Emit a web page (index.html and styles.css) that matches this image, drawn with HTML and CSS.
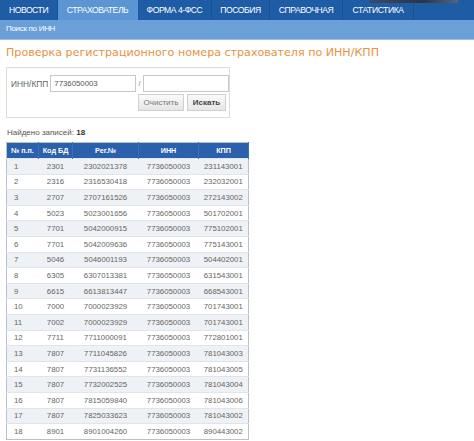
FILE: index.html
```html
<!DOCTYPE html>
<html lang="ru">
<head>
    <meta charset="UTF-8">
    <title>Проверка регистрационного номера страхователя</title>
    <link rel="stylesheet" href="styles.css">
</head>
<body>
    <div class="header">
        <div class="photo"></div>
        <ul class="menu">
            <li>Новости</li>
            <li class="active">Страхователь</li>
            <li>Форма 4-ФСС</li>
            <li>Пособия</li>
            <li>Справочная</li>
            <li>Статистика</li>
        </ul>
        <div class="submenu">Поиск по ИНН</div>
    </div>

    <div class="content">
        <h1>Проверка регистрационного номера страхователя по ИНН/КПП</h1>

        <form class="search-box">
            <div class="search-row">
                <label>ИНН/КПП</label>
                <input type="text" class="field" value="7736050003">
                <span class="slash">/</span>
                <input type="text" class="field">
            </div>
            <div class="buttons">
                <button type="button" class="btn">Очистить</button>
                <button type="button" class="btn btn-bold">Искать</button>
            </div>
        </form>

        <p class="found">Найдено записей: <b>18</b></p>

        <table class="results">
            <thead>
                <tr>
                    <th class="c1">№ п.п.</th>
                    <th class="c2">Код БД</th>
                    <th class="c3">Рег.№</th>
                    <th class="c4">ИНН</th>
                    <th class="c5">КПП</th>
                </tr>
            </thead>
            <tbody>
                <tr><td>1</td><td>2301</td><td>2302021378</td><td>7736050003</td><td>231143001</td></tr>
                <tr><td>2</td><td>2316</td><td>2316530418</td><td>7736050003</td><td>232032001</td></tr>
                <tr><td>3</td><td>2707</td><td>2707161526</td><td>7736050003</td><td>272143002</td></tr>
                <tr><td>4</td><td>5023</td><td>5023001656</td><td>7736050003</td><td>501702001</td></tr>
                <tr><td>5</td><td>7701</td><td>5042000915</td><td>7736050003</td><td>775102001</td></tr>
                <tr><td>6</td><td>7701</td><td>5042009636</td><td>7736050003</td><td>775143001</td></tr>
                <tr><td>7</td><td>5046</td><td>5046001193</td><td>7736050003</td><td>504402001</td></tr>
                <tr><td>8</td><td>6305</td><td>6307013381</td><td>7736050003</td><td>631543001</td></tr>
                <tr><td>9</td><td>6615</td><td>6613813447</td><td>7736050003</td><td>668543001</td></tr>
                <tr><td>10</td><td>7000</td><td>7000023929</td><td>7736050003</td><td>701743001</td></tr>
                <tr><td>11</td><td>7002</td><td>7000023929</td><td>7736050003</td><td>701743001</td></tr>
                <tr><td>12</td><td>7711</td><td>7711000091</td><td>7736050003</td><td>772801001</td></tr>
                <tr><td>13</td><td>7807</td><td>7711045826</td><td>7736050003</td><td>781043003</td></tr>
                <tr><td>14</td><td>7807</td><td>7731136552</td><td>7736050003</td><td>781043005</td></tr>
                <tr><td>15</td><td>7807</td><td>7732002525</td><td>7736050003</td><td>781043004</td></tr>
                <tr><td>16</td><td>7807</td><td>7815059840</td><td>7736050003</td><td>781043006</td></tr>
                <tr><td>17</td><td>7807</td><td>7825033623</td><td>7736050003</td><td>781043002</td></tr>
                <tr><td>18</td><td>8901</td><td>8901004260</td><td>7736050003</td><td>890443002</td></tr>
            </tbody>
        </table>
    </div>
</body>
</html>
```

FILE: styles.css
```css
body {
    margin: 0;
    font-family: 'Liberation Sans', Arial, sans-serif;
    font-size: 8px;
    color: #555;
    background: #fff;
}

.header {
    position: relative;
}

.photo {
    position: absolute;
    top: 0;
    left: 370px;
    width: 88px;
    height: 3px;
    background: linear-gradient(90deg, #3a4a66, #2b3448 60%, #56647e);
}

.menu {
    list-style: none;
    margin: 0;
    padding: 0;
    display: flex;
    height: 20px;
    background: #1f5ca6;
}

.menu li {
    box-sizing: border-box;
    text-transform: uppercase;
    text-align: center;
    white-space: nowrap;
    color: #fff;
    font-size: 8.6px;
    letter-spacing: -0.45px;
    line-height: 20px;
    border-right: 1px solid #1a4f91;
}

.menu li:nth-child(1) { width: 58px; }
.menu li:nth-child(2) { width: 80px; }
.menu li:nth-child(3) { width: 74px; }
.menu li:nth-child(4) { width: 58px; }
.menu li:nth-child(5) { width: 73px; }
.menu li:nth-child(6) { width: 71px; }

.menu li.active {
    background: #5b95d4;
    border-right-color: #5b95d4;
}

.submenu {
    height: 19px;
    line-height: 18px;
    background: #6a9fd8;
    color: #fff;
    font-size: 8px;
    letter-spacing: -0.3px;
    padding-left: 6px;
    border-bottom: 1px solid #9cbfe4;
}

.content {
    padding: 0 6px;
}

h1 {
    font-family: 'DejaVu Sans', sans-serif;
    font-weight: normal;
    font-size: 11.1px;
    color: #e8923c;
    margin: 5px 0 0;
    line-height: 16px;
    white-space: nowrap;
}

.search-box {
    width: 222px;
    border: 1px solid #dcdcdc;
    padding: 7px 0 6px;
    margin: 6px 0 0;
}

.search-row {
    display: flex;
    align-items: center;
    height: 17px;
}

.search-row label {
    width: 47px;
    padding-left: 4px;
    font-size: 8.4px;
    color: #666;
}

.field {
    width: 78px;
    height: 15px;
    padding: 0 3px;
    margin: 0;
    border: 1px solid #c8c8c8;
    font-family: inherit;
    font-size: 7.8px;
    color: #555;
    box-sizing: content-box;
}

.slash {
    width: 8px;
    text-align: center;
    color: #888;
}

.buttons {
    display: flex;
    justify-content: flex-end;
    gap: 3px;
    padding-right: 3px;
    margin-top: 2px;
}

.btn {
    height: 17px;
    width: 46px;
    padding: 0;
    border: 1px solid #cfcfcf;
    background: linear-gradient(#fafafa, #e6e6e6);
    font-family: inherit;
    font-size: 8px;
    color: #777;
}

.btn-bold {
    font-weight: bold;
    color: #444;
    width: 39px;
}

.found {
    margin: 10px 0 5px 1px;
    font-size: 8px;
    color: #555;
}

.found b {
    color: #333;
}

.results {
    border-collapse: collapse;
    table-layout: fixed;
    width: 237px;
    border: 1px solid #b9c2cc;
    font-size: 7.8px;
}

.results th {
    background: #2b60ad;
    color: #fff;
    font-size: 7.2px;
    height: 15px;
    padding: 0;
    text-align: center;
    white-space: nowrap;
    border-right: 1px solid #3d6fb6;
}

.results td {
    height: 14.6px;
    padding: 0;
    text-align: center;
    white-space: nowrap;
    border-top: 1px solid #e1e5ea;
    color: #666;
}

.results td:first-child {
    text-align: left;
    padding-left: 7px;
}

.results tbody tr:nth-child(odd) {
    background: #eef1f5;
}

.c1 { width: 31px; }
.c2 { width: 33px; }
.c3 { width: 65px; }
.c4 { width: 59px; }
.c5 { width: 49px; }
```
